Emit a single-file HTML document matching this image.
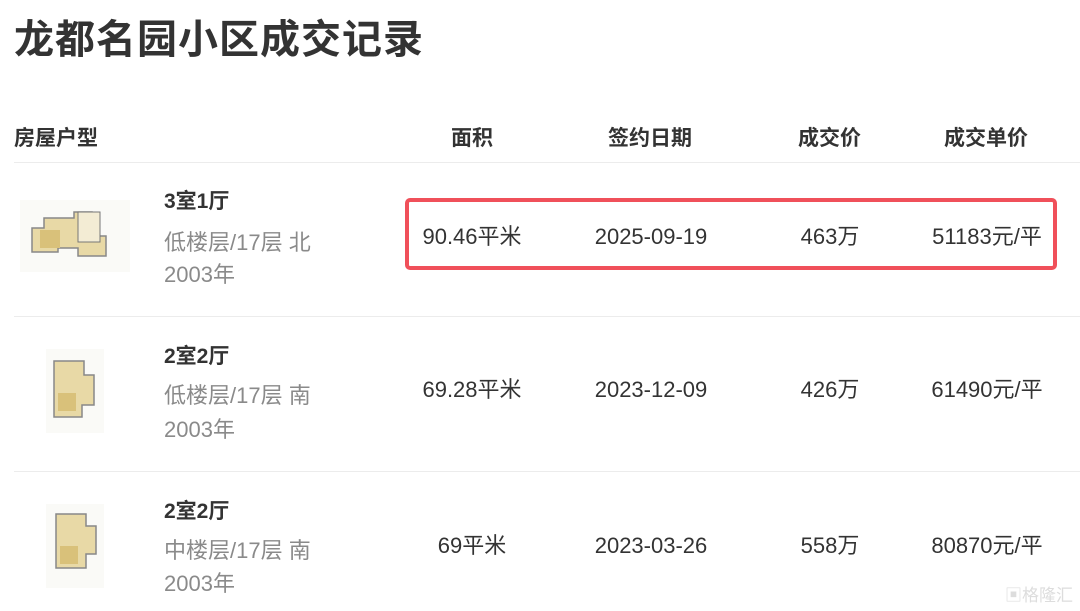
<!DOCTYPE html>
<html><head><meta charset="utf-8"><style>
body{margin:0;width:1080px;height:611px;background:#fff;position:relative;overflow:hidden;font-family:"Liberation Sans","Noto Sans CJK SC",sans-serif;color:#333}
.a{position:absolute;white-space:nowrap;line-height:28px;height:28px}
.t{left:14px;top:20px;font-size:40px;font-weight:bold;color:#333;letter-spacing:1px;line-height:40px;height:40px}
.h{top:125px;font-size:21px;font-weight:bold;color:#333}
.line{position:absolute;left:14px;right:0;height:1px;background:#ececec}
.n{font-size:21px;font-weight:bold;color:#333}
.g{font-size:22px;color:#8a8a8a}
.c{font-size:22px;color:#333;transform:translateX(-50%)}
.box{position:absolute;left:405px;top:198px;width:644px;height:64px;border:4px solid #f0505a;border-radius:5px}
</style></head><body>
<div class="a t">龙都名园小区成交记录</div>
<div class="a h" style="left:14px">房屋户型</div>
<div class="a h" style="left:451px">面积</div>
<div class="a h" style="left:608px">签约日期</div>
<div class="a h" style="left:798px">成交价</div>
<div class="a h" style="left:944px">成交单价</div>
<div class="line" style="top:162px"></div>
<div class="line" style="top:316px"></div>
<div class="line" style="top:471px"></div>

<!-- row1 -->
<svg class="a" style="left:18px;top:192px;height:86px" width="116" height="86"><rect x="2" y="8" width="110" height="72" fill="#fafaf7"/><path d="M14 36h12v-10h30v-6h18v24h14v20H60v-8H40v4H14z" fill="#e8d9a6" stroke="#888" stroke-width="1.5"/><rect x="60" y="20" width="22" height="30" fill="#f3ecd4" stroke="#777"/><rect x="22" y="38" width="20" height="18" fill="#d9c17a"/></svg>
<div class="a n" style="left:164px;top:188px">3室1厅</div>
<div class="a g" style="left:164px;top:229px">低楼层/17层 北</div>
<div class="a g" style="left:164px;top:261px">2003年</div>
<div class="a c" style="left:472px;top:223px">90.46平米</div>
<div class="a c" style="left:651px;top:223px">2025-09-19</div>
<div class="a c" style="left:830px;top:223px">463万</div>
<div class="a c" style="left:987px;top:223px">51183元/平</div>
<div class="box"></div>

<!-- row2 -->
<svg class="a" style="left:42px;top:345px;height:90px" width="66" height="90"><rect x="4" y="4" width="58" height="84" fill="#fafaf7"/><path d="M12 16h30v14h10v30H40v12H12z" fill="#e8d9a6" stroke="#888" stroke-width="1.5"/><rect x="16" y="48" width="18" height="18" fill="#d9c17a"/></svg>
<div class="a n" style="left:164px;top:343px">2室2厅</div>
<div class="a g" style="left:164px;top:382px">低楼层/17层 南</div>
<div class="a g" style="left:164px;top:416px">2003年</div>
<div class="a c" style="left:472px;top:376px">69.28平米</div>
<div class="a c" style="left:651px;top:376px">2023-12-09</div>
<div class="a c" style="left:830px;top:376px">426万</div>
<div class="a c" style="left:987px;top:376px">61490元/平</div>

<!-- row3 -->
<svg class="a" style="left:42px;top:500px;height:90px" width="66" height="90"><rect x="4" y="4" width="58" height="84" fill="#fafaf7"/><path d="M14 14h30v12h10v28H44v14H14z" fill="#e8d9a6" stroke="#888" stroke-width="1.5"/><rect x="18" y="46" width="18" height="18" fill="#d9c17a"/></svg>
<div class="a n" style="left:164px;top:498px">2室2厅</div>
<div class="a g" style="left:164px;top:537px">中楼层/17层 南</div>
<div class="a g" style="left:164px;top:570px">2003年</div>
<div class="a c" style="left:472px;top:532px">69平米</div>
<div class="a c" style="left:651px;top:532px">2023-03-26</div>
<div class="a c" style="left:830px;top:532px">558万</div>
<div class="a c" style="left:987px;top:532px">80870元/平</div>

<div class="a" style="left:1005px;top:582px;font-size:17px;color:#ddd">▣格隆汇</div>
</body></html>
